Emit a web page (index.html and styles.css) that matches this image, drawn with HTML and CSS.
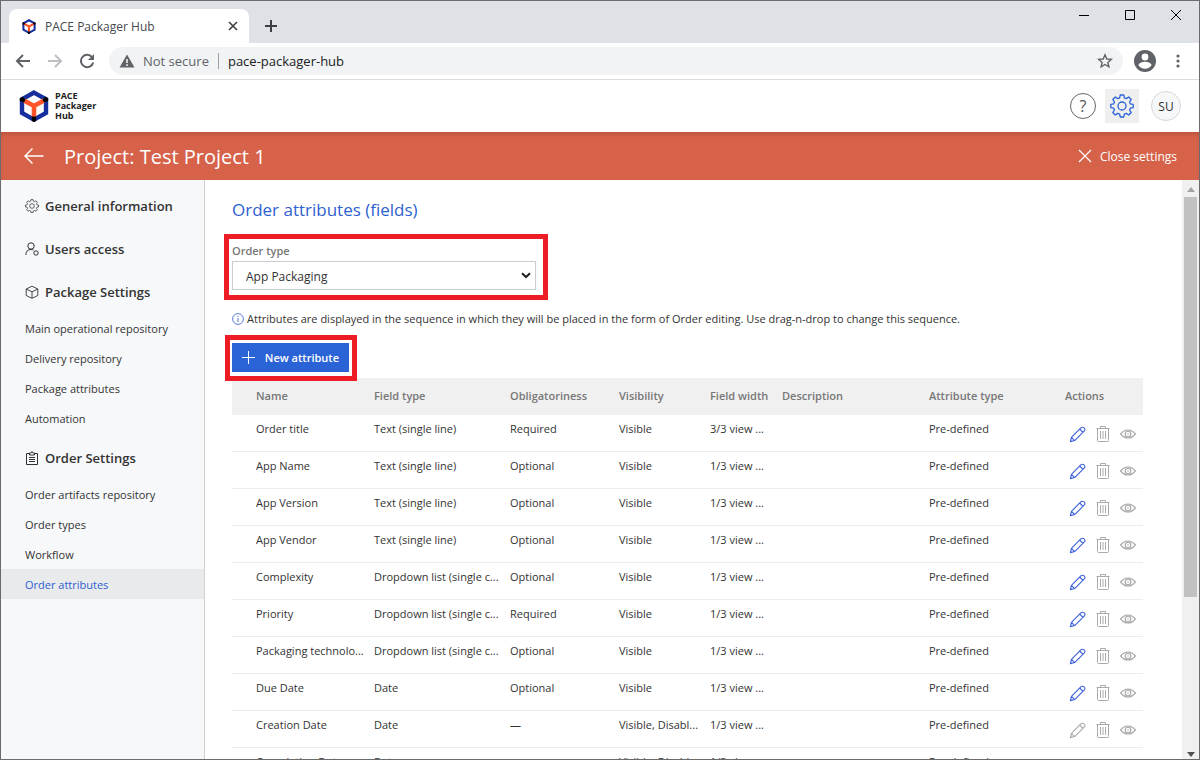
FILE: index.html
```html
<!DOCTYPE html>
<html lang="en">
<head>
<meta charset="utf-8">
<title>PACE Packager Hub</title>
<link rel="stylesheet" href="styles.css">
</head>
<body>
<svg class="defs" aria-hidden="true">
  <symbol id="logo" viewBox="0 0 30 32">
    <path d="M15 2.600 27 9.300V23L15 29.600 3 23V9.300Z" fill="none" stroke="#172f9d" stroke-width="4.400"/>
    <path d="M5 10.500 15 16 25 10.500M15 16V27" fill="none" stroke="#ff5529" stroke-width="4.600"/>
    <path d="M0.800 8.500 3.500 6.500 6.500 9.800 5 12.500 0.800 11ZM29.200 8.500 26.500 6.500 23.500 9.800 25 12.500 29.200 11ZM12.800 26.500H17.200V31L15 32 12.800 31Z" fill="#000"/>
  </symbol>
  <symbol id="gear" viewBox="0 0 24 24">
    <path d="M10.200 1h3.600l.5 2.800 2 .8 2.400-1.600 2.500 2.500-1.600 2.400.8 2 2.800.5v3.200l-2.800.5-.8 2 1.600 2.400-2.500 2.500-2.400-1.600-2 .8-.5 2.800h-3.600l-.5-2.800-2-.8-2.400 1.600-2.500-2.500 1.600-2.400-.8-2L.800 13.600v-3.200l2.800-.5.8-2-1.600-2.400L5.300 3l2.400 1.600 2-.8Z" fill="none" stroke="currentColor" stroke-width="1.300" stroke-linejoin="round"/>
    <circle cx="12" cy="12" r="4" fill="none" stroke="currentColor" stroke-width="1.300"/>
  </symbol>
  <symbol id="pencil" viewBox="0 0 18 18">
    <path d="M1.500 16.500 2.600 12 12.500 2Q14.200.6 16 2T16 5.500L6 15.400ZM2.600 12 6 15.400M11.300 3.200 14.800 6.700" fill="none" stroke="currentColor" stroke-width="1.200" stroke-linejoin="round"/>
  </symbol>
  <symbol id="trash" viewBox="0 0 14 18">
    <path d="M.5 3.500H13.500M4.500 3.500V1.500H9.500V3.500M1.500 3.500V15.500Q1.500 16.500 2.500 16.500H11.500Q12.500 16.500 12.500 15.500V3.500M4.500 6V14M7 6V14M9.500 6V14" fill="none" stroke="currentColor"/>
  </symbol>
  <symbol id="eye" viewBox="0 0 16 10">
    <path d="M.6 5Q4 1 8 1T15.400 5Q12 9 8 9T.6 5Z" fill="none" stroke="currentColor" stroke-width="1.200"/>
    <circle cx="8" cy="5" r="2.800" fill="none" stroke="currentColor" stroke-width="1.200"/><circle cx="8" cy="5" r=".8" fill="currentColor"/>
  </symbol>
</svg>

<div class="tabstrip">
  <div class="tab">
    <svg class="favicon"><use href="#logo"/></svg>
    <span class="tab-title">PACE Packager Hub</span>
    <button class="plain" aria-label="Close tab"><svg width="10" height="10" viewBox="0 0 10 10"><path d="M1 1 9 9M9 1 1 9" stroke="#3c4043" stroke-width="1.600"/></svg></button>
  </div>
  <button class="plain new-tab" aria-label="New tab"><svg width="12" height="12" viewBox="0 0 12 12"><path d="M6 0V12M0 6H12" stroke="#3c4043" stroke-width="2"/></svg></button>
  <div class="window-buttons">
    <button class="plain" aria-label="Minimize"><svg width="10" height="10"><path d="M0 5.500H10" stroke="#000"/></svg></button>
    <button class="plain" aria-label="Maximize"><svg width="10" height="10"><path d="M.5.5H9.500V9.500H.5Z" fill="none" stroke="#000"/></svg></button>
    <button class="plain" aria-label="Close"><svg width="10" height="10"><path d="M0 0 10 10M10 0 0 10" stroke="#000"/></svg></button>
  </div>
</div>

<div class="toolbar">
  <button class="plain" aria-label="Back"><svg width="16" height="16" viewBox="0 0 16 16"><path d="M15 8H2M8 2 2 8 8 14" fill="none" stroke="#5f6368" stroke-width="2"/></svg></button>
  <button class="plain" aria-label="Forward"><svg width="16" height="16" viewBox="0 0 16 16"><path d="M1 8H14M8 2 14 8 8 14" fill="none" stroke="#bdbfc2" stroke-width="2"/></svg></button>
  <button class="plain" aria-label="Reload"><svg width="16" height="16" viewBox="0 0 16 16"><path d="M13.300 4.500A6.200 6.200 0 1 0 14.200 9.500" fill="none" stroke="#5f6368" stroke-width="2"/><path d="M15 1V7H9Z" fill="#5f6368"/></svg></button>
  <div class="address">
    <svg width="16" height="14" viewBox="0 0 16 14"><path d="M8 .5 15.500 13.500H.5Z" fill="#5f6368"/><path d="M8 5V9M8 10.300V12" stroke="#f1f3f4" stroke-width="1.600"/></svg>
    <span class="insecure">Not secure</span>
    <input class="url" type="text" aria-label="Address" value="pace-packager-hub">
    <button class="plain" aria-label="Bookmark"><svg width="16" height="16" viewBox="0 0 16 16"><path d="M8 1.800 9.800 6 14.300 6.400 10.900 9.400 11.900 13.800 8 11.500 4.100 13.800 5.100 9.400 1.700 6.400 6.200 6Z" fill="none" stroke="#5f6368" stroke-width="1.400"/></svg></button>
  </div>
  <button class="plain" aria-label="Profile"><svg width="22" height="22" viewBox="0 0 22 22"><circle cx="11" cy="11" r="11" fill="#5f6368"/><circle cx="11" cy="7" r="3.400" fill="#fff"/><path d="M4.300 15Q6.500 11.800 11 11.800T17.700 15Q15.500 18.700 11 18.700T4.300 15Z" fill="#fff"/></svg></button>
  <button class="plain menu" aria-label="Menu"><svg width="4" height="14" viewBox="0 0 4 14"><g fill="#5f6368"><circle cx="2" cy="2" r="1.600"/><circle cx="2" cy="7" r="1.600"/><circle cx="2" cy="12" r="1.600"/></g></svg></button>
</div>

<header class="app-header">
  <svg class="logo"><use href="#logo"/></svg>
  <div class="brand">PACE<br>Packager<br>Hub</div>
  <button class="round help" aria-label="Help">?</button>
  <button class="settings" aria-label="Settings"><svg width="24" height="24"><use href="#gear"/></svg></button>
  <button class="round user">SU</button>
</header>

<div class="project-bar">
  <button class="plain" aria-label="Back to projects"><svg width="20" height="18" viewBox="0 0 20 18"><path d="M19.500 9H1M8.500 1.500 1 9 8.500 16.500" fill="none" stroke="#fff" stroke-width="1.400"/></svg></button>
  <h1>Project: Test Project 1</h1>
  <button class="plain close-settings"><svg width="14" height="14" viewBox="0 0 14 14"><path d="M1 1 13 13M13 1 1 13" stroke="#fff" stroke-width="1.200"/></svg>Close settings</button>
</div>

<div class="workspace">
  <nav class="sidebar">
    <div class="group">
      <a class="section" href="#general"><svg><use href="#gear"/></svg>General information</a>
      <a class="section" href="#users"><svg viewBox="0 0 14 14"><g fill="none" stroke="currentColor"><circle cx="6" cy="4" r="3.200"/><path d="M.8 13Q1 7.500 6 7.500 7.500 7.500 8.500 8.200"/><circle cx="11" cy="11" r="2.200"/></g></svg>Users access</a>
      <a class="section" href="#package"><svg viewBox="0 0 14 14"><path d="M7 1.200 12.800 4V10.500L7 13.300 1.200 10.500V4ZM1.200 4 7 6.800 12.800 4M7 6.800V13.300" fill="none" stroke="currentColor" stroke-width=".9"/></svg>Package Settings</a>
      <a class="item" href="#main-repository">Main operational repository</a>
      <a class="item" href="#delivery-repository">Delivery repository</a>
      <a class="item" href="#package-attributes">Package attributes</a>
      <a class="item" href="#automation">Automation</a>
    </div>
    <div class="group">
      <a class="section" href="#order"><svg viewBox="0 0 14 14"><path d="M4 2.500H1.500V13.500H12.500V2.500H10M4.500 4V2H6L7 .5 8 2H9.500V4ZM4 6.500H10M4 8.500H10M4 10.500H10" fill="none" stroke="currentColor"/></svg>Order Settings</a>
      <a class="item" href="#artifacts">Order artifacts repository</a>
      <a class="item" href="#types">Order types</a>
      <a class="item" href="#workflow">Workflow</a>
      <a class="item active" href="#attributes" aria-current="page">Order attributes</a>
    </div>
  </nav>

  <main class="content">
    <h2>Order attributes (fields)</h2>
    <div class="order-type marked">
      <label for="order-type">Order type</label>
      <div class="select-wrap">
        <select id="order-type"><option>App Packaging</option></select>
        <svg width="10" height="7" viewBox="0 0 10 7"><path d="M1 1.200 5 5 9 1.200" fill="none" stroke="#222" stroke-width="2"/></svg>
      </div>
    </div>
    <p class="notice"><svg width="12" height="12" viewBox="0 0 12 12"><circle cx="6" cy="6" r="5.400" fill="none" stroke="#4a6fd8" stroke-width=".9"/><path d="M6 5V9M6 3V4" stroke="#4a6fd8"/></svg>Attributes are displayed in the sequence in which they will be placed in the form of Order editing. Use drag-n-drop to change this sequence.</p>
    <div class="new-attribute marked">
      <button><svg width="14" height="14" viewBox="0 0 14 14"><path d="M6.500 0V13M0 6.500H13" stroke="#fff"/></svg>New attribute</button>
    </div>
    <table>
      <colgroup><col class="c-name"><col class="c-type"><col class="c-oblig"><col class="c-vis"><col class="c-width"><col class="c-desc"><col class="c-attr"><col class="c-act"></colgroup>
      <thead><tr><th>Name</th><th>Field type</th><th>Obligatoriness</th><th>Visibility</th><th>Field width</th><th>Description</th><th>Attribute type</th><th>Actions</th></tr></thead>
      <tbody>
        <tr><td>Order title</td><td>Text (single line)</td><td>Required</td><td>Visible</td><td>3/3 view ...</td><td></td><td>Pre-defined</td><td><div class="actions"><button class="edit" aria-label="Edit"><svg><use href="#pencil"/></svg></button><button class="delete" aria-label="Delete"><svg><use href="#trash"/></svg></button><button class="view" aria-label="View"><svg><use href="#eye"/></svg></button></div></td></tr>
        <tr><td>App Name</td><td>Text (single line)</td><td>Optional</td><td>Visible</td><td>1/3 view ...</td><td></td><td>Pre-defined</td><td><div class="actions"><button class="edit" aria-label="Edit"><svg><use href="#pencil"/></svg></button><button class="delete" aria-label="Delete"><svg><use href="#trash"/></svg></button><button class="view" aria-label="View"><svg><use href="#eye"/></svg></button></div></td></tr>
        <tr><td>App Version</td><td>Text (single line)</td><td>Optional</td><td>Visible</td><td>1/3 view ...</td><td></td><td>Pre-defined</td><td><div class="actions"><button class="edit" aria-label="Edit"><svg><use href="#pencil"/></svg></button><button class="delete" aria-label="Delete"><svg><use href="#trash"/></svg></button><button class="view" aria-label="View"><svg><use href="#eye"/></svg></button></div></td></tr>
        <tr><td>App Vendor</td><td>Text (single line)</td><td>Optional</td><td>Visible</td><td>1/3 view ...</td><td></td><td>Pre-defined</td><td><div class="actions"><button class="edit" aria-label="Edit"><svg><use href="#pencil"/></svg></button><button class="delete" aria-label="Delete"><svg><use href="#trash"/></svg></button><button class="view" aria-label="View"><svg><use href="#eye"/></svg></button></div></td></tr>
        <tr><td>Complexity</td><td>Dropdown list (single c...</td><td>Optional</td><td>Visible</td><td>1/3 view ...</td><td></td><td>Pre-defined</td><td><div class="actions"><button class="edit" aria-label="Edit"><svg><use href="#pencil"/></svg></button><button class="delete" aria-label="Delete"><svg><use href="#trash"/></svg></button><button class="view" aria-label="View"><svg><use href="#eye"/></svg></button></div></td></tr>
        <tr><td>Priority</td><td>Dropdown list (single c...</td><td>Required</td><td>Visible</td><td>1/3 view ...</td><td></td><td>Pre-defined</td><td><div class="actions"><button class="edit" aria-label="Edit"><svg><use href="#pencil"/></svg></button><button class="delete" aria-label="Delete"><svg><use href="#trash"/></svg></button><button class="view" aria-label="View"><svg><use href="#eye"/></svg></button></div></td></tr>
        <tr><td>Packaging technolo...</td><td>Dropdown list (single c...</td><td>Optional</td><td>Visible</td><td>1/3 view ...</td><td></td><td>Pre-defined</td><td><div class="actions"><button class="edit" aria-label="Edit"><svg><use href="#pencil"/></svg></button><button class="delete" aria-label="Delete"><svg><use href="#trash"/></svg></button><button class="view" aria-label="View"><svg><use href="#eye"/></svg></button></div></td></tr>
        <tr><td>Due Date</td><td>Date</td><td>Optional</td><td>Visible</td><td>1/3 view ...</td><td></td><td>Pre-defined</td><td><div class="actions"><button class="edit" aria-label="Edit"><svg><use href="#pencil"/></svg></button><button class="delete" aria-label="Delete"><svg><use href="#trash"/></svg></button><button class="view" aria-label="View"><svg><use href="#eye"/></svg></button></div></td></tr>
        <tr><td>Creation Date</td><td>Date</td><td>—</td><td>Visible, Disabl...</td><td>1/3 view ...</td><td></td><td>Pre-defined</td><td><div class="actions"><button class="edit locked" aria-label="Edit"><svg><use href="#pencil"/></svg></button><button class="delete" aria-label="Delete"><svg><use href="#trash"/></svg></button><button class="view" aria-label="View"><svg><use href="#eye"/></svg></button></div></td></tr>
        <tr><td>Completion Date</td><td>Date</td><td>—</td><td>Visible, Disabl...</td><td>1/3 view ...</td><td></td><td>Pre-defined</td><td></td></tr>
      </tbody>
    </table>
  </main>

  <div class="scrollbar" aria-hidden="true">
    <svg width="8" height="5"><path d="M0 5 4 0 8 5Z" fill="#a3a3a3"/></svg>
    <div class="track"><div class="thumb"></div></div>
    <svg width="8" height="5"><path d="M0 0H8L4 5Z" fill="#505050"/></svg>
  </div>
</div>
</body>
</html>
```
FILE: styles.css
```css
* { box-sizing: border-box; }

body {
  margin: 0;
  height: 100vh;
  display: flex;
  flex-direction: column;
  overflow: hidden;
  border: 1px solid #6b6b6b;
  background: #fff;
  color: #333;
  font-family: "Open Sans", "Noto Sans", sans-serif;
  font-size: 11px;
}

button, select, input { font: inherit; color: inherit; }
svg { display: block; flex: none; }
.defs { position: absolute; width: 0; height: 0; }

.plain {
  display: flex;
  align-items: center;
  padding: 0;
  border: 0;
  background: none;
}

/* browser window */
.tabstrip {
  display: flex;
  flex: none;
  height: 42px;
  padding: 8px 18px 0 8px;
  background: #dee1e6;
}
.tab {
  display: flex;
  align-items: center;
  width: 240px;
  padding: 0 11px 0 13px;
  border-radius: 8px 8px 0 0;
  background: #fff;
}
.favicon { width: 14px; height: 15px; }
.tab-title { flex: 1; padding-left: 9px; font-size: 12px; color: #45494d; }
.new-tab { margin-left: 16px; }
.window-buttons { display: flex; align-items: flex-start; gap: 36px; margin-left: auto; padding-top: 1px; }

.toolbar {
  display: flex;
  align-items: center;
  flex: none;
  gap: 16px;
  height: 37px;
  padding: 0 19px 0 14px;
  border-bottom: 1px solid #dadce0;
}
.address {
  display: flex;
  align-items: center;
  flex: 1;
  height: 28px;
  margin: 0 -5px 0 -2px;
  padding: 0 10px;
  border-radius: 14px;
  background: #f1f3f4;
  font-size: 13px;
}
.insecure {
  margin-left: 8px;
  padding-right: 9px;
  border-right: 1px solid #9aa0a6;
  line-height: 16px;
  color: #5f6368;
}
.url { flex: 1; padding: 0 0 0 9px; border: 0; background: none; color: #202124; }
.menu { margin-left: 4px; }

/* application header */
.app-header {
  display: flex;
  align-items: center;
  flex: none;
  height: 52px;
  padding: 0 18px;
}
.logo { width: 30px; height: 32px; }
.brand { margin-left: 6px; font-size: 9px; font-weight: 700; line-height: 10px; color: #222; }
.round {
  display: flex;
  align-items: center;
  justify-content: center;
  padding: 0;
  border-radius: 50%;
}
.help {
  width: 26px;
  height: 26px;
  margin-left: auto;
  border: 1px solid #666;
  background: #fff;
  color: #555;
  font-size: 16px;
}
.settings {
  display: flex;
  align-items: center;
  justify-content: center;
  width: 34px;
  height: 34px;
  margin: 0 12px 0 9px;
  padding: 0;
  border: 0;
  background: #efefef;
  color: #2a63d6;
}
.user { width: 30px; height: 30px; border: 1px solid #d5d7da; background: #f6f7f9; font-size: 12px; }

.project-bar {
  display: flex;
  align-items: center;
  flex: none;
  height: 48px;
  padding: 0 22px 0 23px;
  background: #d66249;
  box-shadow: inset 0 5px 5px -3px #b9523b;
  color: #fff;
}
h1 { margin: 0 0 0 20px; font-size: 20px; font-weight: 400; }
.close-settings { gap: 8px; margin-left: auto; font-size: 12px; }

/* settings pages */
.workspace { display: flex; flex: 1; min-height: 0; }
.sidebar {
  display: flex;
  flex-direction: column;
  flex: none;
  gap: 3px;
  width: 204px;
  padding-top: 4px;
  border-right: 1px solid #cfd1d3;
  background: #f7f8fa;
}
.sidebar a {
  display: flex;
  align-items: center;
  padding-left: 24px;
  color: #333;
  text-decoration: none;
}
.section { height: 43px; gap: 6px; font-size: 13px; font-weight: 600; }
.section svg { width: 14px; height: 14px; }
.item { height: 30px; }
.sidebar .active { background: #e9eaec; color: #2f5fd0; }

.content { flex: 1; min-width: 0; padding: 18px 39px 0 27px; }
h2 { margin: 0 0 19px; font-size: 17px; font-weight: 400; line-height: 24px; color: #2f5fd0; }

.marked { position: relative; }
.marked::after {
  content: "";
  position: absolute;
  border: 5px solid #ee1c25;
  pointer-events: none;
}
.order-type { width: 304px; }
.order-type::after { inset: -7px -12px -10px -8px; }
.order-type label { display: block; line-height: 20px; font-weight: 600; color: #777; }
.select-wrap { position: relative; }
.select-wrap svg { position: absolute; right: 5px; top: 11px; pointer-events: none; }
select {
  display: block;
  width: 100%;
  height: 29px;
  padding: 2px 24px 0 13px;
  border: 1px solid #ccc;
  border-radius: 0;
  background: #fff;
  font-size: 12px;
  appearance: none;
}

.notice { display: flex; align-items: center; gap: 3px; margin: 19px 0 14px; line-height: 20px; white-space: nowrap; }

.new-attribute { width: 117px; margin-bottom: 6px; }
.new-attribute::after { inset: -8px -8px -9px -7px; }
.new-attribute button {
  display: flex;
  align-items: center;
  justify-content: space-between;
  width: 100%;
  height: 29px;
  padding: 0 10px;
  border: 0;
  background: #2a63d6;
  color: #fff;
  font-weight: 600;
}

table { width: 100%; table-layout: fixed; border-collapse: separate; border-spacing: 0; }
.c-name { width: 142px; }
.c-type { width: 136px; }
.c-oblig { width: 109px; }
.c-vis { width: 91px; }
.c-width { width: 72px; }
.c-attr { width: 136px; }
.c-act { width: 78px; }
th, td { height: 37px; padding: 0; text-align: left; white-space: nowrap; }
th { padding-bottom: 2px; background: #f0f0f0; font-weight: 600; color: #777; }
td { padding-bottom: 10px; border-bottom: 1px solid #ececec; }
td:last-child { padding: 2px 0 0; }
th:first-child, td:first-child { padding-left: 24px; }

.actions { display: flex; align-items: center; gap: 10px; padding-left: 4px; }
.actions button { padding: 0; border: 0; background: none; color: #aaa; }
.actions .edit { color: #3f62dc; }
.actions .locked { color: #aaa; }
.edit svg { width: 17px; height: 17px; }
.delete svg { width: 14px; height: 18px; }
.view svg { width: 16px; height: 10px; }

.scrollbar {
  display: flex;
  flex-direction: column;
  align-items: center;
  flex: none;
  width: 17px;
  padding: 7px 2px 2px;
  background: #f0f0f0;
}
.track { flex: 1; width: 13px; padding-top: 5px; }
.thumb { height: 72%; background: #c1c1c1; }
```
